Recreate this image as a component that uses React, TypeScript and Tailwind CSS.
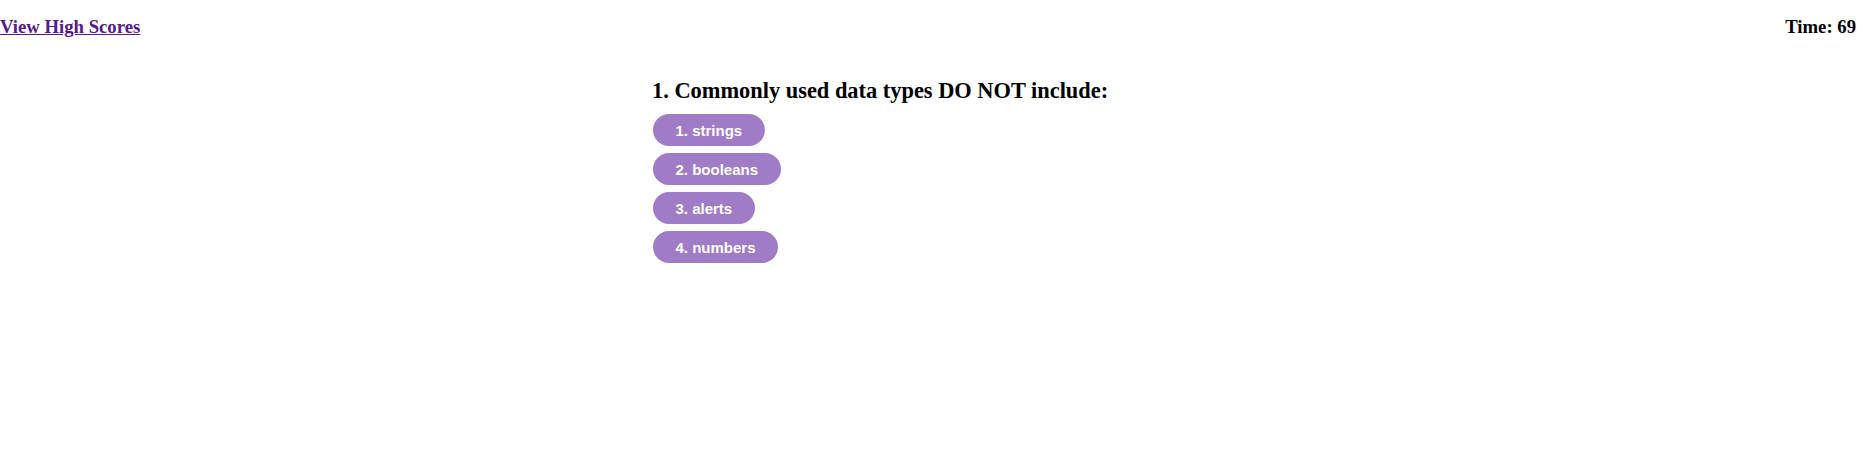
import React from "react";

const choices = ["1. strings", "2. booleans", "3. alerts", "4. numbers"];

export default function App() {
  return (
    <div className="w-[1863px] h-[454px] bg-white" style={{ fontFamily: '"Liberation Serif", serif' }}>
      <header className="flex justify-between items-start pt-[16px] pr-[7px]">
        <a href="#" className="text-[18.72px] leading-[21px] font-bold text-[#551a8b] underline">
          View High Scores
        </a>
        <div className="text-[18.72px] leading-[21px] font-bold text-black">Time: 69</div>
      </header>
      <main className="ml-[652px] mt-[41px]">
        <h2 className="text-[22.4px] leading-[25px] font-bold text-black">
          1. Commonly used data types DO NOT include:
        </h2>
        <div className="flex flex-col items-start gap-[7px] mt-[11px] ml-[1px]">
          {choices.map((c) => (
            <button
              key={c}
              className="h-[32px] px-[22.5px] rounded-full bg-[#a07cc7] text-white text-[15px] font-bold leading-none"
              style={{ fontFamily: '"Liberation Sans", Arial, sans-serif' }}
            >
              {c}
            </button>
          ))}
        </div>
      </main>
    </div>
  );
}
